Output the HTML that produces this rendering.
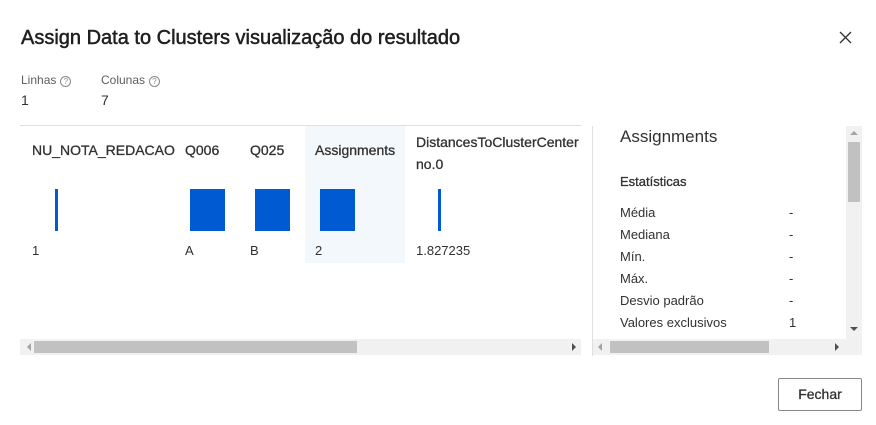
<!DOCTYPE html>
<html><head><meta charset="utf-8"><style>
*{margin:0;padding:0;box-sizing:border-box}
body{width:876px;height:425px;background:#fff;font-family:"Liberation Sans",sans-serif;color:#323130;position:relative;overflow:hidden}
.a{position:absolute;white-space:nowrap}
.q{display:inline-block;width:11px;height:11px;border:1px solid #8a8886;border-radius:50%;font-size:8px;line-height:9px;text-align:center;color:#8a8886;margin-left:4px;vertical-align:0px}
.h{font-size:14px;color:#323130;-webkit-text-stroke:0.3px #323130}
.v{font-size:13px;color:#323130}
.bar{position:absolute;background:#005ad2}
.s{font-size:13px;color:#323130}
</style></head><body>
<div class="a" style="left:21px;top:27px;font-size:20px;color:#201f1e;-webkit-text-stroke:0.5px #201f1e">Assign Data to Clusters visualização do resultado</div>
<svg class="a" style="left:839px;top:31px" width="13" height="13"><path d="M1 1L12 12M12 1L1 12" stroke="#323130" stroke-width="1.3"/></svg>
<div class="a" style="left:21px;top:73px;font-size:12px;color:#605e5c">Linhas<span class="q">?</span></div>
<div class="a" style="left:101px;top:73px;font-size:12px;color:#605e5c">Colunas<span class="q">?</span></div>
<div class="a" style="left:21px;top:92px;font-size:14px">1</div>
<div class="a" style="left:101px;top:92px;font-size:14px">7</div>
<div class="a" style="left:20px;top:125px;width:561px;height:1px;background:#e1dfdd"></div>
<div class="a" style="left:305px;top:126px;width:100px;height:137px;background:#f3f8fc"></div>
<div class="a h" style="left:32px;top:142px">NU_NOTA_REDACAO</div>
<div class="a h" style="left:185px;top:142px">Q006</div>
<div class="a h" style="left:250px;top:142px">Q025</div>
<div class="a h" style="left:315px;top:142px">Assignments</div>
<div class="a h" style="left:416px;top:131px;line-height:22px">DistancesToClusterCenter<br>no.0</div>
<div class="bar" style="left:55px;top:189px;width:3px;height:42px"></div>
<div class="bar" style="left:190px;top:189px;width:35px;height:42px"></div>
<div class="bar" style="left:255px;top:189px;width:35px;height:42px"></div>
<div class="bar" style="left:320px;top:189px;width:35px;height:42px"></div>
<div class="bar" style="left:438px;top:189px;width:3px;height:42px"></div>
<div class="a v" style="left:32px;top:243px">1</div>
<div class="a v" style="left:185px;top:243px">A</div>
<div class="a v" style="left:250px;top:243px">B</div>
<div class="a v" style="left:315px;top:243px">2</div>
<div class="a v" style="left:416px;top:243px">1.827235</div>
<div class="a" style="left:20px;top:339px;width:561px;height:16px;background:#f1f1f1"></div>
<div class="a" style="left:34px;top:341px;width:323px;height:12px;background:#c1c1c1"></div>
<div class="a" style="left:27px;top:343px;width:0;height:0;border:4px solid transparent;border-right:4px solid #a3a3a3;border-left:0"></div>
<div class="a" style="left:572px;top:343px;width:0;height:0;border:4px solid transparent;border-left:4px solid #505050;border-right:0"></div>
<div class="a" style="left:592px;top:126px;width:1px;height:230px;background:#e1dfdd"></div>
<div class="a" style="left:620px;top:127px;font-size:17px">Assignments</div>
<div class="a" style="left:620px;top:174px;font-size:13px;-webkit-text-stroke:0.3px #323130">Estatísticas</div>
<div class="a s" style="left:620px;top:205px">Média</div><div class="a s" style="left:789px;top:205px">-</div>
<div class="a s" style="left:620px;top:227px">Mediana</div><div class="a s" style="left:789px;top:227px">-</div>
<div class="a s" style="left:620px;top:249px">Mín.</div><div class="a s" style="left:789px;top:249px">-</div>
<div class="a s" style="left:620px;top:271px">Máx.</div><div class="a s" style="left:789px;top:271px">-</div>
<div class="a s" style="left:620px;top:293px">Desvio padrão</div><div class="a s" style="left:789px;top:293px">-</div>
<div class="a s" style="left:620px;top:315px">Valores exclusivos</div><div class="a s" style="left:789px;top:315px">1</div>
<div class="a" style="left:846px;top:126px;width:16px;height:213px;background:#f1f1f1"></div>
<div class="a" style="left:848px;top:142px;width:12px;height:60px;background:#c1c1c1"></div>
<div class="a" style="left:850px;top:131px;border:4px solid transparent;border-bottom:4px solid #a3a3a3;border-top:0"></div>
<div class="a" style="left:850px;top:327px;border:4px solid transparent;border-top:4px solid #505050;border-bottom:0"></div>
<div class="a" style="left:593px;top:339px;width:269px;height:16px;background:#f1f1f1"></div>
<div class="a" style="left:610px;top:341px;width:159px;height:12px;background:#c1c1c1"></div>
<div class="a" style="left:598px;top:343px;border:4px solid transparent;border-right:4px solid #a3a3a3;border-left:0"></div>
<div class="a" style="left:835px;top:343px;border:4px solid transparent;border-left:4px solid #505050;border-right:0"></div>
<div class="a" style="left:778px;top:378px;width:84px;height:33px;border:1px solid #8a8886;border-radius:2px;font-size:14px;-webkit-text-stroke:0.3px #323130;text-align:center;line-height:31px">Fechar</div>
</body></html>
